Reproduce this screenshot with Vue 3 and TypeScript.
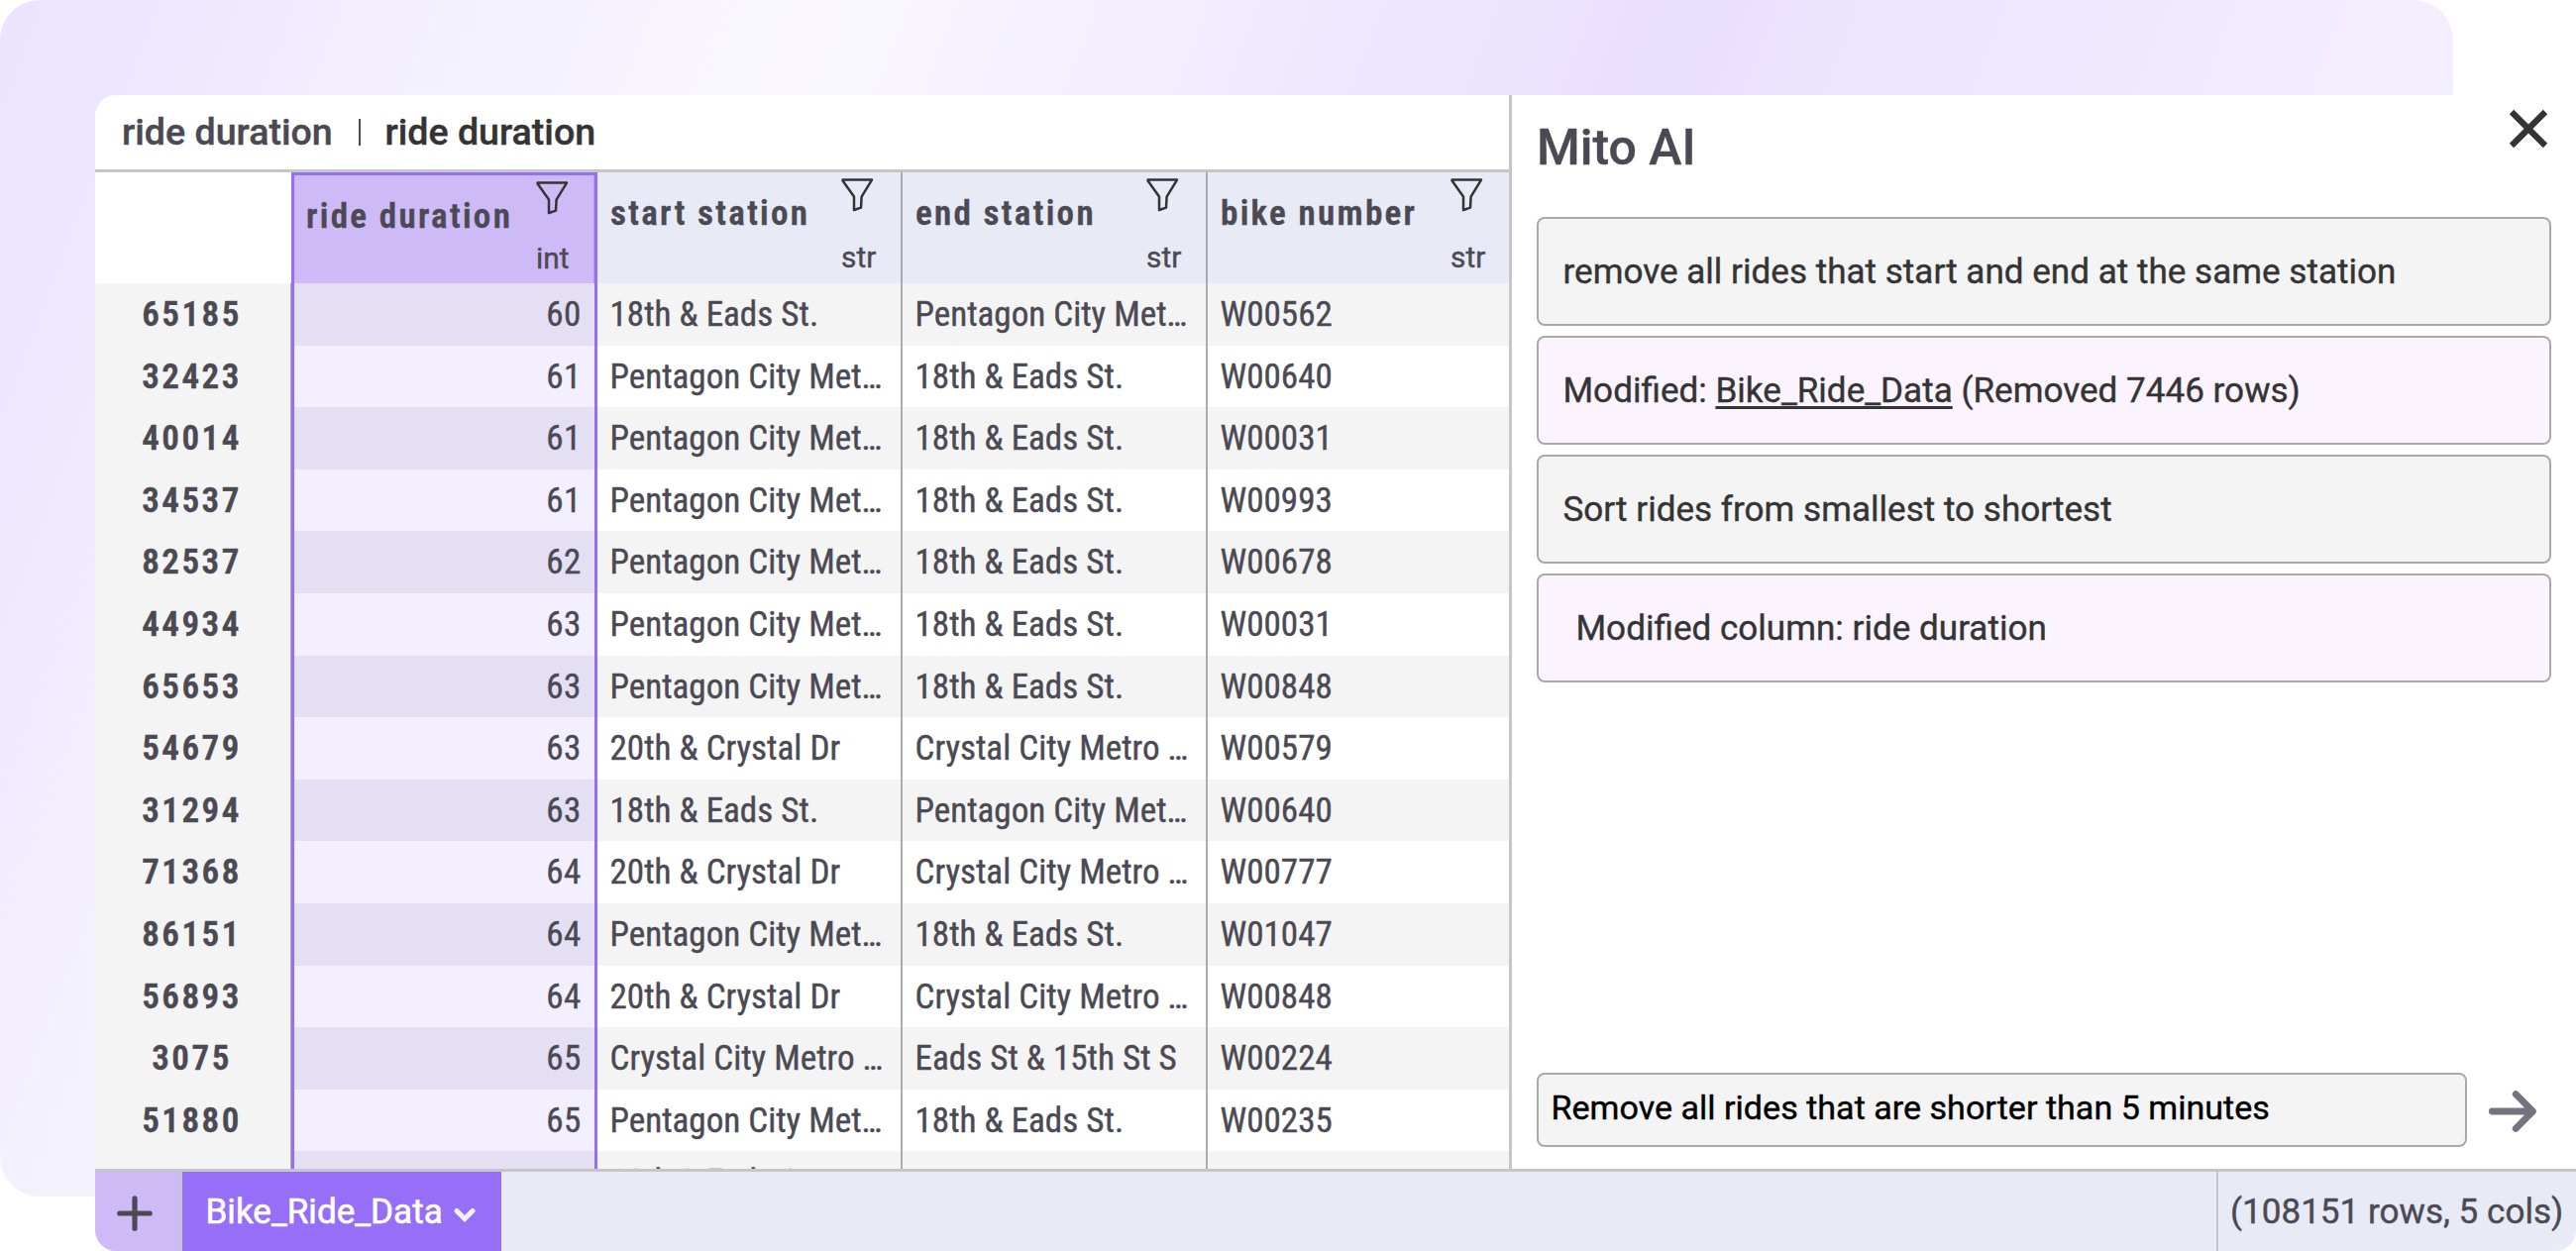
<script setup lang="ts">
interface Column {
  name: string
  type: 'int' | 'str'
  selected?: boolean
}

interface Ride {
  index: string
  duration: number
  start: string
  end: string
  bike: string
}

interface Message {
  kind: 'user' | 'result'
  text: string
  link?: string
  tail?: string
  indent?: boolean
}

const columns: Column[] = [
  { name: 'ride duration', type: 'int', selected: true },
  { name: 'start station', type: 'str' },
  { name: 'end station', type: 'str' },
  { name: 'bike number', type: 'str' },
]

const eads = '18th & Eads St.'
const pentagon = 'Pentagon City Met…'
const crystalDr = '20th & Crystal Dr'
const crystalMetro = 'Crystal City Metro …'

const rides: Ride[] = [
  { index: '65185', duration: 60, start: eads, end: pentagon, bike: 'W00562' },
  { index: '32423', duration: 61, start: pentagon, end: eads, bike: 'W00640' },
  { index: '40014', duration: 61, start: pentagon, end: eads, bike: 'W00031' },
  { index: '34537', duration: 61, start: pentagon, end: eads, bike: 'W00993' },
  { index: '82537', duration: 62, start: pentagon, end: eads, bike: 'W00678' },
  { index: '44934', duration: 63, start: pentagon, end: eads, bike: 'W00031' },
  { index: '65653', duration: 63, start: pentagon, end: eads, bike: 'W00848' },
  { index: '54679', duration: 63, start: crystalDr, end: crystalMetro, bike: 'W00579' },
  { index: '31294', duration: 63, start: eads, end: pentagon, bike: 'W00640' },
  { index: '71368', duration: 64, start: crystalDr, end: crystalMetro, bike: 'W00777' },
  { index: '86151', duration: 64, start: pentagon, end: eads, bike: 'W01047' },
  { index: '56893', duration: 64, start: crystalDr, end: crystalMetro, bike: 'W00848' },
  { index: '3075', duration: 65, start: crystalMetro, end: 'Eads St & 15th St S', bike: 'W00224' },
  { index: '51880', duration: 65, start: pentagon, end: eads, bike: 'W00235' },
]

const messages: Message[] = [
  { kind: 'user', text: 'remove all rides that start and end at the same station' },
  { kind: 'result', text: 'Modified: ', link: 'Bike_Ride_Data', tail: ' (Removed 7446 rows)' },
  { kind: 'user', text: 'Sort rides from smallest to shortest' },
  { kind: 'result', text: 'Modified column: ride duration', indent: true },
]
</script>

<template>
  <div class="page">
    <div class="backdrop"></div>
    <div class="window">
      <div class="main">
        <section class="sheet">
          <div class="formula-bar">
            <span class="formula-name">ride duration</span>
            <span class="formula-divider"></span>
            <span class="formula-value">ride duration</span>
          </div>

          <div class="head-row">
            <div class="head-corner"></div>
            <div v-for="col in columns" :key="col.name" class="head-cell" :class="{ selected: col.selected }">
              <span class="head-name">{{ col.name }}</span>
              <div class="head-side">
                <svg class="filter" width="33" height="34" viewBox="0 0 33 34" fill="none">
                  <path
                    d="M1.6 1.6H31L20.6 18.6L20 29.6L13 32V18.6L1.6 2.6Z"
                    stroke="#343434"
                    stroke-width="2.5"
                    stroke-linejoin="round"
                  />
                </svg>
                <span class="head-type">{{ col.type }}</span>
              </div>
            </div>
          </div>

          <div class="rows">
            <div v-for="ride in rides" :key="ride.index" class="row">
              <div class="cell index">{{ ride.index }}</div>
              <div class="cell selected">{{ ride.duration }}</div>
              <div class="cell">{{ ride.start }}</div>
              <div class="cell">{{ ride.end }}</div>
              <div class="cell">{{ ride.bike }}</div>
            </div>
            <div class="row">
              <div class="cell index"></div>
              <div class="cell selected"></div>
              <div class="cell">{{ eads }}</div>
              <div class="cell"></div>
              <div class="cell"></div>
            </div>
          </div>
        </section>

        <aside class="chat">
          <header class="chat-head">
            <h1>Mito AI</h1>
            <svg class="close" width="40" height="40" viewBox="0 0 40 40">
              <path d="M3 3L37 37M37 3L3 37" stroke="#343434" stroke-width="6.2" />
            </svg>
          </header>
          <div class="messages">
            <div v-for="m in messages" :key="m.text" class="message" :class="[m.kind, { indent: m.indent }]">
              <span>{{ m.text }}<u v-if="m.link">{{ m.link }}</u>{{ m.tail }}</span>
            </div>
          </div>
          <div class="prompt">
            <div class="prompt-input">Remove all rides that are shorter than 5 minutes</div>
            <svg class="send" width="50" height="44" viewBox="0 0 50 44" fill="none">
              <path
                d="M4.4 22H44M28.2 4.6L45.4 22L28.2 39.4"
                stroke="#77727f"
                stroke-width="6.8"
                stroke-linecap="round"
                stroke-linejoin="round"
              />
            </svg>
          </div>
        </aside>
      </div>

      <footer class="footer">
        <div class="add">
          <svg width="36" height="36" viewBox="0 0 36 36">
            <path d="M18 2.8V33.2M2.8 18H33.2" stroke="#4b4953" stroke-width="5.2" stroke-linecap="round" />
          </svg>
        </div>
        <div class="tab">
          <span>Bike_Ride_Data</span>
          <svg width="22" height="16" viewBox="0 0 22 16" fill="none">
            <path d="M3 3.4L11 11.4L19 3.4" stroke="#f1f0f3" stroke-width="5" stroke-linecap="round" />
          </svg>
        </div>
        <div class="shape">(108151 rows, 5 cols)</div>
      </footer>
    </div>
  </div>
</template>

<style>
body {
  margin: 0;
  background: #fff;
}
</style>

<style scoped>
.page {
  position: relative;
  box-sizing: border-box;
  width: 2600px;
  height: 1263px;
  padding: 96px 0 0 96px;
  overflow: hidden;
  font-family: Roboto, sans-serif;
  font-size: 35.1px;
  color: #4b4953;
  -webkit-text-stroke: 0.4px currentColor;
}

.page * {
  box-sizing: border-box;
}

.backdrop {
  position: absolute;
  top: 0;
  left: 0;
  width: 2476px;
  height: 1208px;
  border-radius: 40px;
  background: linear-gradient(
    110.8deg,
    #ece3fe 0%,
    #efe8ff 8%,
    #f3ecff 11.5%,
    #f3f0ff 15.5%,
    #f7f4ff 23.5%,
    #faf8fe 27.5%,
    #faf8fe 29%,
    #f6f3ff 33.5%,
    #f3edff 41%,
    #efe8ff 45.5%,
    #ede4ff 51%,
    #e9dffe 58.3%,
    #ede4ff 64.5%,
    #f0e8ff 74%,
    #f4ecff 82%,
    #f3efff 87%
  );
}

.window {
  position: relative;
  display: flex;
  flex-direction: column;
  width: 2504px;
  height: 1167px;
  overflow: hidden;
  border-radius: 21px;
  background: #fff;
}

.main {
  display: flex;
  flex: none;
  height: 1084px;
}

.sheet {
  display: flex;
  flex-direction: column;
  width: 1427px;
  overflow: hidden;
}

/* Formula bar */
.formula-bar {
  display: flex;
  flex: none;
  align-items: center;
  height: 78px;
  padding: 0 0 2px 27px;
  border-bottom: 3px solid #c6c6c6;
  font-size: 37.6px;
  font-weight: 500;
  white-space: nowrap;
}

.formula-divider {
  width: 2.6px;
  height: 27px;
  margin: 2px 24px 0 26px;
  background: #4b4953;
}

.formula-value {
  color: #343434;
}

/* Column headers */
.head-row,
.row {
  display: grid;
  flex: none;
  grid-template-columns: 198px 309px 308px 308px 304px;
}

.head-row {
  height: 112px;
}

.head-cell {
  display: flex;
  justify-content: space-between;
  padding: 6px 24px 0 13px;
  border-right: 2.6px solid #ababab;
  background: #e8eaf6;
}

.head-cell:last-child {
  padding-right: 23px;
  border-right: 0;
}

.head-cell.selected {
  padding: 6px 23px 0 12px;
  border: solid #966ef7;
  border-width: 3px 3px 0;
  background: #cdbaf7;
  box-shadow: inset -1px 0 #b2a0dd;
}

.head-name {
  margin-top: 14px;
  font-family: 'Roboto Condensed', Roboto, sans-serif;
  font-weight: 600;
  line-height: 42px;
  letter-spacing: 2.3px;
  white-space: nowrap;
}

.head-side {
  display: flex;
  flex-direction: column;
  width: 36px;
}

.filter {
  display: block;
  flex: none;
}

.head-type {
  margin-top: 28px;
  font-size: 29.8px;
  line-height: 36px;
}

.selected .head-type {
  margin-top: 26px;
}

/* Data rows */
.rows {
  flex: 1;
  overflow: hidden;
}

.row {
  height: 62.6px;
}

.cell {
  padding-left: 12.5px;
  overflow: hidden;
  border-right: 2.6px solid #ababab;
  background: #fff;
  font-family: 'Roboto Condensed', Roboto, sans-serif;
  line-height: 63.4px;
  white-space: nowrap;
}

.row:nth-child(odd) .cell {
  background: #f4f4f4;
}

.row .cell.index {
  padding: 0 2px 0 0;
  border-right: 1px solid #ababab;
  background: #f4f4f4;
  font-weight: 600;
  letter-spacing: 2.5px;
  text-align: center;
}

.cell:last-child {
  border-right: 0;
}

.row .cell.selected {
  padding: 0 13.5px 0 0;
  border: solid #966ef7;
  border-width: 0 3px;
  background: #f3efff;
  letter-spacing: 0.3px;
  text-align: right;
}

.row:nth-child(odd) .cell.selected {
  background: #e4dff3;
}

/* Chat panel */
.chat {
  display: flex;
  flex: 1;
  flex-direction: column;
  padding: 0 25px 22.5px 25px;
  border-left: 3px solid #c6c6c6;
}

.chat-head {
  display: flex;
  justify-content: space-between;
  height: 123px;
}

.chat-head h1 {
  margin: 23px 0 0;
  font-size: 50px;
  font-weight: 500;
  line-height: 60px;
}

.close {
  margin: 14px 3px 0 0;
}

.messages {
  display: flex;
  flex-direction: column;
  gap: 10px;
}

.message {
  display: flex;
  align-items: center;
  height: 110px;
  padding-left: 24.5px;
  border: 2.6px solid #a9a9a9;
  border-radius: 8px;
  background: #f4f4f4;
  color: #343434;
  white-space: pre;
}

.message.result {
  background: #fbf4ff;
}

.message.indent {
  padding-left: 37.5px;
}

.message u {
  text-decoration-thickness: 2.6px;
  text-underline-offset: 4px;
  text-decoration-skip-ink: none;
}

.prompt {
  display: flex;
  align-items: center;
  gap: 21px;
  margin-top: auto;
}

.prompt-input {
  width: 939px;
  height: 75px;
  padding-left: 12.5px;
  border: 2.6px solid #a9a9a9;
  border-radius: 8px;
  background: #f4f4f4;
  color: #000;
  font-size: 34.1px;
  line-height: 67px;
  white-space: nowrap;
}

.send {
  margin-top: 4px;
}

/* Footer */
.footer {
  display: flex;
  flex: none;
  height: 83px;
  border-top: 3px solid #c6c6c6;
  background: #e8eaf6;
}

.add {
  display: flex;
  align-items: center;
  justify-content: center;
  width: 88px;
  padding: 3px 6px 0 0;
  border-right: 2.6px solid #c6c6c6;
  background: #cdbaf7;
}

.tab {
  display: flex;
  align-items: center;
  gap: 11px;
  width: 321.5px;
  padding-left: 23.5px;
  background: #966ef7;
  color: #fff;
  -webkit-text-stroke-width: 0.6px;
}

.tab svg {
  margin-top: 7px;
}

.shape {
  display: flex;
  align-items: center;
  width: 363px;
  margin-left: auto;
  padding-left: 12px;
  border-left: 2.6px solid #c6c6c6;
  white-space: nowrap;
}
</style>
